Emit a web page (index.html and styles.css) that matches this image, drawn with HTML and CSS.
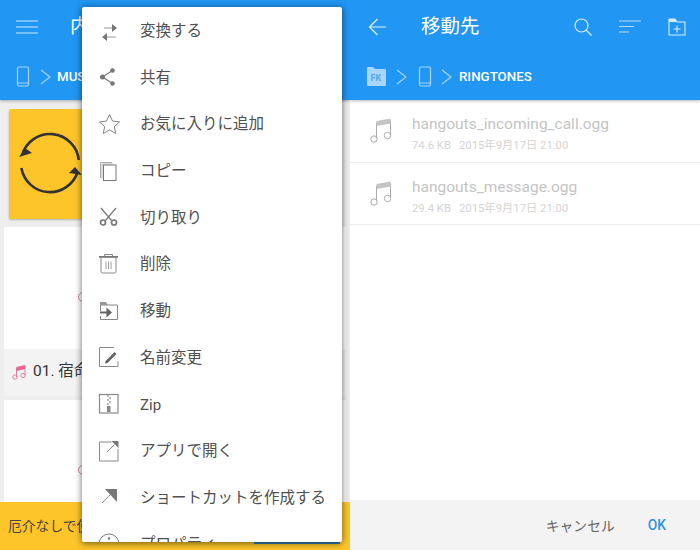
FILE: index.html
```html
<!DOCTYPE html>
<html lang="ja">
<head>
<meta charset="utf-8">
<title>File manager</title>
<link rel="stylesheet" href="styles.css">
</head>
<body>
<div class="app">
  <section class="pane pane-left">
    <header class="appbar">
      <div class="toolbar">
        <svg class="ic-menu" width="22" height="14" viewBox="0 0 22 14"><path d="M0 1h22M0 7h22M0 13h22" stroke="#cfe6fb" stroke-width="1.2" fill="none"/></svg>
        <span class="title title-left">内部</span>
      </div>
      <div class="crumbs crumbs-left">
        <svg class="phone" width="14" height="21" viewBox="0 0 14 21"><rect x="1.500" y="1" width="11" height="19" rx="1.500" fill="none" stroke="#a9d5fa" stroke-width="1.200"/><path d="M1.500 17h11" stroke="#a9d5fa" stroke-width="1"/></svg>
        <svg class="chev" width="11" height="16" viewBox="0 0 11 16"><path d="M1 1l9 7-9 7" fill="none" stroke="#a9d5fa" stroke-width="1.100"/></svg>
        <span class="crumb crumb-left">MUSIC</span>
      </div>
    </header>
    <div class="content">
      <div class="promo">
        <svg width="66" height="66" viewBox="0 0 66 66" class="sync"><path d="M5.100 25A29 29 0 0 1 61.800 30M60.600 42A29 29 0 0 1 4.400 38" fill="none" stroke="#333" stroke-width="2.600"/><path d="M2 27 8 18 15 23z" fill="#333"/><path d="M65 45 58 37 52 43z" fill="#333"/></svg>
      </div>
      <div class="thumb thumb-a"><span class="dot"></span></div>
      <div class="label">
        <svg width="14" height="16" viewBox="0 0 14 16"><path d="M4.500 13V3.500L13 1.500V11.500" fill="none" stroke="#ea7a9c" stroke-width="1"/><path d="M4.500 3.500L13 1.500V5L4.500 7z" fill="#e8648c"/><circle cx="3" cy="13" r="2.200" fill="none" stroke="#ea7a9c"/><circle cx="11" cy="11.500" r="2.200" fill="none" stroke="#ea7a9c"/></svg>
        <span>01. 宿命</span>
      </div>
      <div class="thumb thumb-b"><span class="dot"></span></div>
    </div>
    <div class="bar">
      <span>厄介なしで使う</span>
      <span class="bar-btn"></span>
    </div>
    <ul class="menu">
      <li><svg width="26" height="26" viewBox="0 0 26 26"><path d="M8 10h10" stroke="#999" stroke-width="1.200"/><path d="M16 6l5 4-5 4z" fill="#777"/><path d="M20 19H9" stroke="#999" stroke-width="1.200"/><path d="M11 15l-5 4 5 4z" fill="#777"/></svg><span>変換する</span></li>
      <li><svg width="26" height="26" viewBox="0 0 26 26"><path d="M16.500 6.500 6.500 13l10 6.500" fill="none" stroke="#777" stroke-width="1.200"/><circle cx="16.500" cy="6.500" r="2.300" fill="#777"/><circle cx="6.500" cy="13" r="2.500" fill="#777"/><circle cx="16.500" cy="19.500" r="2.300" fill="#777"/></svg><span>共有</span></li>
      <li><svg width="26" height="26" viewBox="0 0 26 26"><path d="M13.500 3.500l3 6.600 7 .8-5.200 4.800 1.500 6.800-6.300-3.500-6.300 3.500 1.500-6.800-5.200-4.800 7-.8z" fill="none" stroke="#777" stroke-width=".9"/></svg><span>お気に入りに追加</span></li>
      <li><svg width="26" height="26" viewBox="0 0 26 26"><path d="M4.500 20V4.500H16" fill="none" stroke="#aaa" stroke-width="1"/><path d="M6 21V6H17" fill="none" stroke="#bbb" stroke-width="1"/><rect x="7.500" y="7" width="12.500" height="15.500" fill="#fff" stroke="#777" stroke-width="1"/></svg><span>コピー</span></li>
      <li><svg width="26" height="26" viewBox="0 0 26 26"><path d="M5 4l10.500 12.500M20 4 9.500 16.500" stroke="#777" stroke-width="1.200" fill="none"/><circle cx="7" cy="18.500" r="2.500" fill="none" stroke="#777" stroke-width="1.700"/><circle cx="18" cy="18.500" r="2.500" fill="none" stroke="#777" stroke-width="1.700"/></svg><span>切り取り</span></li>
      <li><svg width="26" height="26" viewBox="0 0 26 26"><path d="M3 5h19v1.800H3z" fill="#777"/><path d="M8.500 5V3.500h8V5" fill="none" stroke="#888"/><path d="M5 7v13.500q0 1.500 1.500 1.500h12q1.500 0 1.500-1.500V7" fill="none" stroke="#888"/><path d="M10 10.500v7.500M12.500 10.500v7.500M15 10.500v7.500" stroke="#888" stroke-width=".8"/></svg><span>削除</span></li>
      <li><svg width="26" height="26" viewBox="0 0 26 26"><path d="M4.500 13V7H21.500V21.500H4.500V18" fill="none" stroke="#888" stroke-width="1"/><path d="M4 4h6l2 3H4z" fill="#999"/><path d="M4 15h6.500V11l5.500 5-5.500 5v-4H4z" fill="#666" transform="translate(0 -1.500)"/></svg><span>移動</span></li>
      <li><svg width="26" height="26" viewBox="0 0 26 26"><path d="M18 3.500H3.500v19h18.500V17" fill="none" stroke="#888" stroke-width="1"/><path d="M9 19.500l.6-2.600L18.500 8l2 2-8.900 8.900z" fill="#666"/></svg><span>名前変更</span></li>
      <li><svg width="26" height="26" viewBox="0 0 26 26"><rect x="3.500" y="3.500" width="18.500" height="18.500" fill="none" stroke="#888" stroke-width="1.200"/><path d="M11 5h2M13 7h2M11 9h2M13 11h2M11 13h2" stroke="#777" stroke-width="1"/><rect x="11" y="15" width="3.500" height="6" fill="#888"/></svg><span class="latin">Zip</span></li>
      <li><svg width="26" height="26" viewBox="0 0 26 26"><path d="M15.500 4H3.500v19h18.500V11" fill="none" stroke="#888" stroke-width="1"/><path d="M11 14 18.500 6.500" stroke="#888" stroke-width="1"/><path d="M15.500 3H22.500V10z" fill="#777"/></svg><span>アプリで開く</span></li>
      <li><svg width="26" height="26" viewBox="0 0 26 26"><path d="M6 19 16 9" stroke="#999" stroke-width="1"/><path d="M9 5H21V18z" fill="#777"/></svg><span>ショートカットを作成する</span></li>
      <li><svg width="26" height="26" viewBox="0 0 26 26"><circle cx="13" cy="13" r="10" fill="none" stroke="#777"/><circle cx="13" cy="7.500" r="1.200" fill="#777"/><path d="M13 11v8" stroke="#777" stroke-width="1.600"/></svg><span>プロパティ</span></li>
    </ul>
  </section>
  <section class="pane pane-right">
    <header class="appbar">
      <div class="toolbar">
        <svg class="ic-back" width="20" height="18" viewBox="0 0 20 18"><path d="M18 9H1.500M9.500 1 1.500 9l8 8" fill="none" stroke="#e3f1fd" stroke-width="1.200"/></svg>
        <span class="title title-right">移動先</span>
        <div class="actions">
          <svg width="18" height="18" viewBox="0 0 18 18"><circle cx="7.500" cy="7.500" r="6.500" fill="none" stroke="#d9ecfc" stroke-width="1.200"/><path d="M12 12l5.500 5.500" stroke="#d9ecfc" stroke-width="1.200"/></svg>
          <svg width="22" height="13" viewBox="0 0 22 13"><path d="M0 1h22M0 6.500h15M0 12h10" stroke="#b9dcfa" stroke-width="1.200"/></svg>
          <svg width="18" height="18" viewBox="0 0 18 18"><path d="M1 17V1h6l2 3h8v13z" fill="none" stroke="#d9ecfc" stroke-width="1.100"/><path d="M1 1h6l2 3H1z" fill="#d9ecfc"/><path d="M9 7.500v7M5.500 11h7" stroke="#d9ecfc" stroke-width="1.100"/></svg>
        </div>
      </div>
      <div class="crumbs crumbs-right">
        <svg width="19" height="19" viewBox="0 0 19 19"><path d="M0 1q0-1 1-1h5l2 2h10q1 0 1 1v15q0 1-1 1H1q-1 0-1-1z" fill="#a9d5fa"/><text x="3.500" y="14" class="fk">FK</text></svg>
        <svg class="chev" width="11" height="16" viewBox="0 0 11 16"><path d="M1 1l9 7-9 7" fill="none" stroke="#a9d5fa" stroke-width="1.100"/></svg>
        <svg class="phone phone-right" width="14" height="21" viewBox="0 0 14 21"><rect x="1.500" y="1" width="11" height="19" rx="1.500" fill="none" stroke="#a9d5fa" stroke-width="1.200"/><path d="M1.500 17h11" stroke="#a9d5fa" stroke-width="1"/></svg>
        <svg class="chev" width="11" height="16" viewBox="0 0 11 16"><path d="M1 1l9 7-9 7" fill="none" stroke="#a9d5fa" stroke-width="1.100"/></svg>
        <span class="crumb">RINGTONES</span>
      </div>
    </header>
    <div class="files">
      <div class="file">
        <svg width="22" height="25" viewBox="0 0 22 25"><path d="M6.500 20V5L20.500 2.500V17" fill="none" stroke="#aaa"/><path d="M6.500 3 20.500 .5v5L6.500 8z" fill="#c4c4c4"/><circle cx="4" cy="21" r="3.200" fill="none" stroke="#aaa"/><circle cx="17.500" cy="17.500" r="3.200" fill="none" stroke="#aaa"/></svg>
        <div class="file-text">
          <div class="file-name">hangouts_incoming_call.ogg</div>
          <div class="file-meta"><span>74.6 KB</span><span>2015年9月17日 21:00</span></div>
        </div>
      </div>
      <div class="file">
        <svg width="22" height="25" viewBox="0 0 22 25"><path d="M6.500 20V5L20.500 2.500V17" fill="none" stroke="#aaa"/><path d="M6.500 3 20.500 .5v5L6.500 8z" fill="#c4c4c4"/><circle cx="4" cy="21" r="3.200" fill="none" stroke="#aaa"/><circle cx="17.500" cy="17.500" r="3.200" fill="none" stroke="#aaa"/></svg>
        <div class="file-text">
          <div class="file-name">hangouts_message.ogg</div>
          <div class="file-meta"><span>29.4 KB</span><span>2015年9月17日 21:00</span></div>
        </div>
      </div>
    </div>
    <footer class="dialog-actions">
      <span class="btn-cancel">キャンセル</span>
      <span class="btn-ok">OK</span>
    </footer>
  </section>
</div>
</body>
</html>
```
FILE: styles.css
```css
* { box-sizing: border-box; }
html, body { margin: 0; padding: 0; }
body {
  width: 700px;
  height: 550px;
  overflow: hidden;
  background: #fff;
  font-family: Roboto, "Noto Sans CJK JP", sans-serif;
}
.app { display: flex; width: 700px; height: 550px; }
.pane {
  width: 350px;
  height: 550px;
  display: flex;
  flex-direction: column;
  overflow: hidden;
  position: relative;
}
.pane-left { background: #eeeeee; }
.pane-right { background: #fff; box-shadow: inset 1px 0 0 #f4f4f4; }

.appbar {
  height: 100px;
  flex: none;
  background: #2196f3;
  display: flex;
  flex-direction: column;
  box-shadow: 0 1px 3px rgba(0,0,0,.3);
  position: relative;
}
.toolbar { height: 53px; display: flex; align-items: center; flex: none; }
.ic-menu { margin-left: 16px; flex: none; }
.ic-back { margin-left: 18px; flex: none; }
.title {
  color: #fff;
  font-size: 19.5px;
  line-height: 1;
  white-space: nowrap;
}
.title-left { margin-left: 32px; }
.title-right { margin-left: 33px; }
.actions {
  margin-left: auto;
  margin-right: 14px;
  display: flex;
  align-items: center;
  gap: 27px;
}
.crumbs { display: flex; align-items: center; height: 47px; }
.crumbs-left { padding-left: 16px; gap: 10px; }
.crumbs-right { padding-left: 17px; gap: 10px; }
.phone-right { margin-left: 1px; margin-right: -1px; }
.crumb { color: #fff; font-size: 13.3px; font-weight: 500; margin-left: -3px; line-height: 1; }
.crumb-left { margin-left: -4px; }
.fk { font: 700 9px Roboto, sans-serif; fill: #4ea6ec; }

.content {
  flex: 1;
  min-height: 0;
  display: flex;
  flex-direction: column;
  padding: 9px 4px 0;
}
.promo {
  height: 110px;
  margin: 0 12px 8px 5px;
  flex: none;
  background: #fdc52a;
  border-radius: 2px;
  box-shadow: 0 1px 2px rgba(0,0,0,.25);
  display: flex;
  align-items: center;
  padding: 0 0 2px 8px;
}
.thumb { background: #fff; flex: none; display: flex; align-items: flex-start; }
.thumb-a { height: 122px; }
.thumb-b { height: 102px; }
.dot {
  width: 10px;
  height: 10px;
  margin-left: 74px;
  margin-top: 65px;
  border: 1px solid #d9839d;
  border-radius: 50%;
}
.label {
  height: 47px;
  flex: none;
  background: #f3f3f3;
  display: flex;
  align-items: center;
  gap: 7px;
  padding: 0 0 1px 8px;
  margin-bottom: 4px;
  font-size: 15.5px;
  color: #333;
  white-space: nowrap;
}
.label span { line-height: 1; }
.bar {
  height: 48px;
  flex: none;
  background: #fdc52a;
  display: flex;
  align-items: center;
  padding: 0 0 2px 8px;
  font-size: 13.8px;
  color: #444;
  position: relative;
}
.bar-btn {
  position: absolute;
  right: 10px;
  bottom: 6px;
  top: 20px;
  width: 86px;
  background: #2f7fb5;
}

.menu {
  position: absolute;
  left: 82px;
  top: 7px;
  width: 260px;
  height: 535px;
  margin: 0;
  padding: 0.500px 0 0;
  list-style: none;
  background: #fff;
  border-radius: 2px;
  box-shadow: 0 1px 7px rgba(0,0,0,.6);
  overflow: hidden;
}
.menu li {
  height: 46.67px;
  display: flex;
  align-items: center;
  padding: 2px 0 0 14px;
  font-size: 15.5px;
  color: #505050;
  white-space: nowrap;
}
.menu li svg { flex: none; margin: -2px 18px 0 0; }
.menu li span { line-height: 1; }
.menu .latin { font-size: 15px; }

.files { flex: 1; min-height: 0; background: #fff; }
.file {
  height: 62.7px;
  display: flex;
  align-items: center;
  padding-left: 20px;
  border-bottom: 1px solid #eeeeee;
}
.file svg { flex: none; }
.file-text { margin-left: 20px; margin-top: 5px; }
.file-name { font-size: 15.5px; line-height: 20px; color: #c4c4c4; white-space: nowrap; }
.file-meta {
  display: flex;
  gap: 8px;
  margin-top: 5px;
  font-size: 11.3px;
  line-height: 14px;
  color: #d4d4d4;
  white-space: nowrap;
}
.dialog-actions {
  height: 50px;
  flex: none;
  background: #f3f3f3;
  display: flex;
  align-items: center;
  justify-content: flex-end;
  padding-right: 34px;
  gap: 33px;
  font-size: 13.8px;
}
.btn-cancel { color: #666; }
.btn-ok { color: #2b93e6; font-weight: 500; }
```
